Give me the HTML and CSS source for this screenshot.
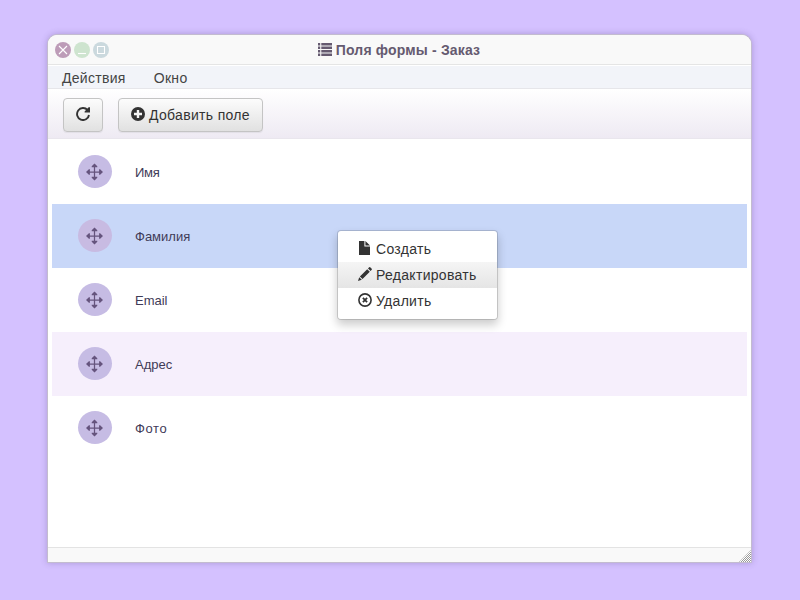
FILE: index.html
```html
<!DOCTYPE html>
<html lang="ru">
<head>
<meta charset="utf-8">
<title>Поля формы - Заказ</title>
<link rel="stylesheet" href="styles.css">
</head>
<body>
<svg width="0" height="0" class="defs">
  <symbol id="move" viewBox="0 0 18 18">
    <path d="M8.5 2v14M2 9h14" stroke="currentColor" stroke-width="1.25" fill="none"/>
    <path d="M8.5 .5L11.3 3.3V4.2H5.7V3.3zM8.5 17.5L5.7 14.7v-.9h5.6v.9zM0 9L2.9 6.2h1v5.6h-1zM17 9L14.1 11.8h-1V6.2h1z" fill="currentColor"/>
  </symbol>
</svg>
<div class="window">
  <header class="titlebar">
    <div class="controls">
      <svg class="control close" viewBox="0 0 16 16"><circle cx="8" cy="8" r="8"/><path d="M4 4l8 8M12 4l-8 8"/></svg>
      <svg class="control minimize" viewBox="0 0 16 16"><circle cx="8" cy="8" r="8"/><path d="M4 11.5h8"/></svg>
      <svg class="control maximize" viewBox="0 0 16 16"><circle cx="8" cy="8" r="8"/><path d="M4.5 4.5h7v7h-7z"/></svg>
    </div>
    <h1 class="title">
      <svg width="14" height="13" viewBox="0 0 14 13" fill="currentColor"><path d="M0 0h2.2v2.4H0zM3.3 0H14v2.4H3.3zM0 3.5h2.2v2.4H0zM3.3 3.5H14v2.4H3.3zM0 7h2.2v2.4H0zM3.3 7H14v2.4H3.3zM0 10.5h2.2v2.4H0zM3.3 10.5H14v2.4H3.3z"/></svg>
      <span>Поля формы - Заказ</span>
    </h1>
  </header>
  <nav class="menubar"><span>Действия</span><span>Окно</span></nav>
  <div class="toolbar">
    <button class="btn refresh"><svg width="14" height="14" viewBox="0 0 14 14"><path d="M11.6 3.1A6 6 0 1 0 13 8" fill="none" stroke="currentColor" stroke-width="1.9"/><path d="M14 .3v5.3H8.6V4.4L12.6.3z" fill="currentColor"/></svg></button>
    <button class="btn add"><svg width="14" height="14" viewBox="0 0 14 14"><circle cx="7" cy="7" r="7" fill="currentColor"/><path d="M7 3v8M3 7h8" stroke="#f6f6f6" stroke-width="2.4"/></svg><span>Добавить поле</span></button>
  </div>
  <main class="list">
    <div class="row"><span class="handle"><svg width="18" height="18"><use href="#move"/></svg></span><span class="label tight">Имя</span></div>
    <div class="row selected"><span class="handle"><svg width="18" height="18"><use href="#move"/></svg></span><span class="label">Фамилия</span></div>
    <div class="row"><span class="handle"><svg width="18" height="18"><use href="#move"/></svg></span><span class="label">Email</span></div>
    <div class="row striped"><span class="handle"><svg width="18" height="18"><use href="#move"/></svg></span><span class="label">Адрес</span></div>
    <div class="row"><span class="handle"><svg width="18" height="18"><use href="#move"/></svg></span><span class="label loose">Фото</span></div>
  </main>
  <footer class="statusbar"><i class="grip"></i></footer>
</div>
<div class="context-menu">
  <div class="item"><svg width="14" height="14" viewBox="0 0 14 14" fill="currentColor"><path d="M1 0h5.4v5.6H12V14H1zM7.4 0L12 4.6H7.4z"/></svg><span>Создать</span></div>
  <div class="item active"><svg width="14" height="14" viewBox="0 0 14 14" fill="currentColor"><path d="M0 14l1.2-3.8 2.6 2.6zM1.9 9.4l7.3-7.2 2.6 2.6-7.3 7.3zM10 1.4l.9-.9q.8-.8 1.6 0l1 1q.8.8 0 1.6l-.9.9z"/></svg><span>Редактировать</span></div>
  <div class="item"><svg width="14" height="14" viewBox="0 0 14 14" fill="none" stroke="currentColor"><circle cx="7" cy="7" r="6.1" stroke-width="1.6"/><path d="M4.9 4.9l4.2 4.2M9.1 4.9L4.9 9.1" stroke-width="1.8"/></svg><span>Удалить</span></div>
</div>
</body>
</html>
```

FILE: styles.css
```css
* { box-sizing: border-box; }
body {
  margin: 0;
  height: 600px;
  padding: 35px 48px 0;
  overflow: hidden;
  background: #d4c1ff;
  font-family: "Liberation Sans", sans-serif;
  font-size: 14px;
  line-height: 20px;
  color: #333;
}
svg { display: block; flex: none; }
.defs { position: absolute; }
.window {
  display: flex;
  flex-direction: column;
  width: 703px;
  height: 527px;
  background: #fff;
  border-radius: 9px 9px 0 0;
  box-shadow: 0 0 0 1px #c3bccf, 0 0 6px 1px rgba(80, 60, 120, .3);
}
.titlebar {
  display: grid;
  grid-template-columns: 100px 1fr 100px;
  align-items: center;
  height: 30px;
  padding: 0 8px 0 7px;
  background: #f9f9f9;
  border-bottom: 1px solid #e5e5e5;
  border-radius: 9px 9px 0 0;
}
.controls { display: flex; gap: 3px; }
.control { width: 16px; height: 16px; }
.control path { fill: none; stroke: #fff; stroke-width: 1.1; }
.close { fill: #bd9cb8; }
.minimize { fill: #cee4cf; }
.maximize { fill: #cbd9de; }
.title {
  display: flex;
  align-items: center;
  justify-content: center;
  gap: 4px;
  margin: 0;
  color: #655a70;
  font-size: 14px;
  letter-spacing: .17px;
  white-space: nowrap;
}
.menubar {
  display: flex;
  height: 24px;
  padding: 2px 14px 0;
  gap: 28px;
  background: #f2f4f9;
  border-top: 1px solid #fff;
  border-bottom: 1px solid #e6e6ea;
  color: #444;
  letter-spacing: .3px;
}
.toolbar {
  display: flex;
  gap: 15px;
  height: 50px;
  padding: 9px 15px;
  background: linear-gradient(#fff, #eeeaf3);
  border-bottom: 1px solid #e9e6ed;
}
.btn {
  display: flex;
  align-items: center;
  justify-content: center;
  gap: 4px;
  height: 34px;
  padding: 0;
  border: 1px solid #c4c4c4;
  border-radius: 4px;
  background: linear-gradient(#fcfcfc, #e1e1e1);
  box-shadow: 0 1px 1px rgba(0, 0, 0, .06);
  color: #333;
  font: inherit;
  letter-spacing: .32px;
  white-space: nowrap;
}
.btn svg { margin-top: -2px; }
.refresh { width: 40px; }
.add { width: 145px; }
.list { flex: 1; padding: 1px 4px 0; }
.row {
  display: flex;
  align-items: center;
  gap: 23px;
  height: 64px;
  padding: 0 26px;
  color: #3f3b57;
  font-size: 13px;
}
.label { padding-top: 1px; }
.tight { letter-spacing: -.3px; }
.loose { letter-spacing: .6px; }
.selected { background: #c8d7f8; }
.striped { background: #f6effc; }
.handle {
  display: flex;
  align-items: center;
  justify-content: center;
  width: 34px;
  height: 33px;
  margin-top: -1px;
  border-radius: 50%;
  background: #c6bce4;
  color: #65547d;
}
.selected .handle { background: #c8bbe2; }
.statusbar {
  display: flex;
  align-items: flex-end;
  justify-content: flex-end;
  height: 15px;
  background: #f9f9f9;
  border-top: 1px solid #e3e3e3;
}
.grip {
  width: 12px;
  height: 12px;
  clip-path: polygon(100% 0, 100% 100%, 0 100%);
  background: conic-gradient(#999 25%, #fff 0 50%, #999 0 75%, #fff 0) 0 0 / 2px 2px;
}
.context-menu {
  position: absolute;
  left: 337px;
  top: 230px;
  width: 161px;
  height: 90px;
  padding: 5px 0;
  border: 1px solid rgba(0, 0, 0, .14);
  border-radius: 4px;
  background: #fff;
  background-clip: padding-box;
  box-shadow: 0 5px 10px rgba(0, 0, 0, .2);
  letter-spacing: .3px;
}
.item {
  display: flex;
  align-items: center;
  gap: 4px;
  height: 26px;
  padding: 0 20px;
  white-space: nowrap;
}
.item svg { margin-top: -2px; }
.active { background: linear-gradient(#f5f5f5, #e5e5e5); }
```
